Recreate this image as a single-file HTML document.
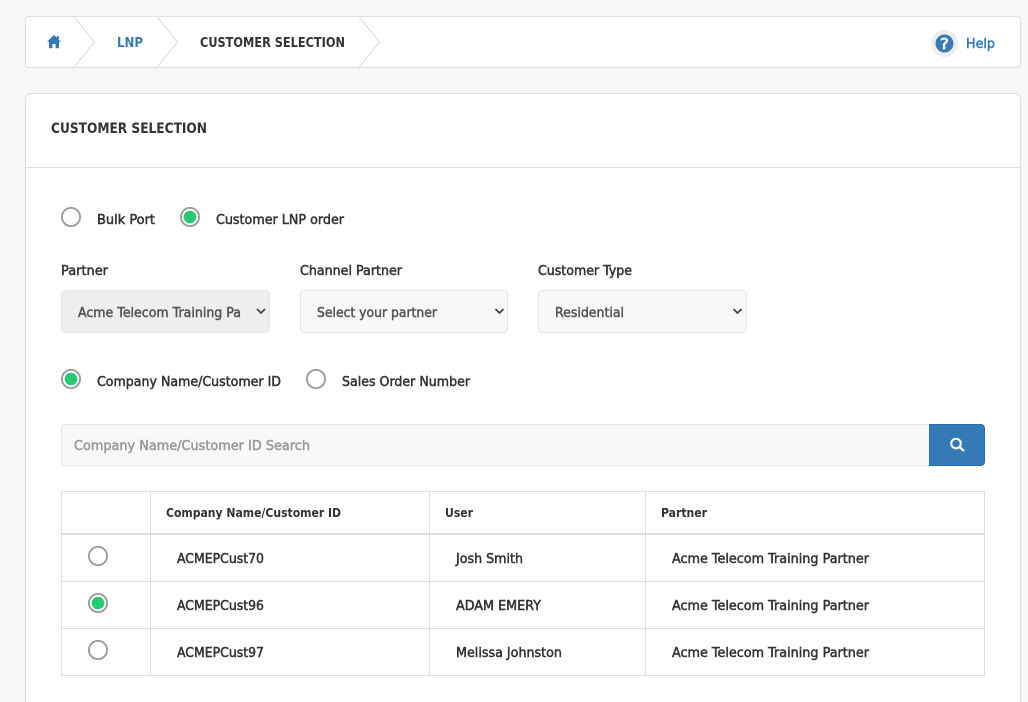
<!DOCTYPE html>
<html><head><meta charset="utf-8"><title>Customer Selection</title>
<style>
html,body{margin:0;padding:0;width:1028px;height:702px;overflow:hidden;background:#f8f8f8}
#w{position:relative;width:1028px;height:702px;overflow:hidden}
.a{position:absolute;box-sizing:border-box}
.sel{border:1px solid #e6e6e6;border-radius:4px;background:#f8f8f8;top:290px;height:43px}
.l{background:#dedede}
svg{position:absolute;left:0;top:0}
text{font-family:"DejaVu Sans","Liberation Sans",sans-serif;font-size:13px;fill:#333;stroke:#333;stroke-width:.5px}
text.b{font-weight:700;stroke-width:0}
text.blue{fill:#337ab7;stroke:#337ab7}
text.g{fill:#555;stroke:#555}
</style></head><body><div id="w">
<div class="a" style="left:25px;top:16px;width:996px;height:52px;background:#fff;border:1px solid #dfdfdf;border-radius:4px;box-shadow:0 0 1px rgba(0,0,0,.08)"></div>
<div class="a" style="left:25px;top:93px;width:996px;height:620px;background:#fff;border:1px solid #dfdfdf;border-radius:6px;box-shadow:0 0 1px rgba(0,0,0,.08)"></div>
<div class="a l" style="left:26px;top:167px;width:994px;height:1px"></div>
<div class="a sel" style="left:61px;width:209px;background:#eee"></div>
<div class="a sel" style="left:300px;width:208px"></div>
<div class="a sel" style="left:538px;width:209px"></div>
<div class="a" style="left:61px;top:424px;width:869px;height:42px;background:#f8f8f8;border:1px solid #e6e6e6;border-radius:4px 0 0 4px"></div>
<div class="a" style="left:929px;top:424px;width:56px;height:42px;background:#337ab7;border:1px solid #2e6da4;border-radius:0 4px 4px 0"></div>
<div class="a" style="left:61px;top:491px;width:924px;height:185px;border:1px solid #dedede"></div>
<div class="a l" style="left:150px;top:491px;width:1px;height:185px"></div>
<div class="a l" style="left:429px;top:491px;width:1px;height:185px"></div>
<div class="a l" style="left:645px;top:491px;width:1px;height:185px"></div>
<div class="a l" style="left:61px;top:533px;width:924px;height:2px"></div>
<div class="a l" style="left:61px;top:581px;width:924px;height:1px"></div>
<div class="a l" style="left:61px;top:628px;width:924px;height:1px"></div>
<svg width="1028" height="702" viewBox="0 0 1028 702">
<g fill="#fff" stroke="#dcdcdc">
<path d="M73 15.500L94.500 42L73 68.500"/>
<path d="M156 15.500L177.500 42L156 68.500"/>
<path d="M358 15.500L379.500 42L358 68.500"/>
</g>
<path d="M54 35L47 41.800H49V48.300H52.400V44H55.600V48.300H59V41.800H61L58.800 39.700V36H56.900V37.800Z" fill="#337ab7"/>
<circle cx="944.500" cy="43.500" r="13.500" fill="#eee"/>
<circle cx="944.500" cy="43.500" r="9" fill="#3a7ab5"/>
<text x="940" y="49" textLength="9" lengthAdjust="spacingAndGlyphs" style="font-size:15px;fill:#fff;stroke:#fff;stroke-width:.7px">?</text>

<text class="b blue" x="117" y="47" textLength="26" lengthAdjust="spacingAndGlyphs">LNP</text>
<text class="b" x="200" y="47" textLength="145" lengthAdjust="spacingAndGlyphs">CUSTOMER SELECTION</text>
<text class="blue" x="966" y="48" textLength="29" lengthAdjust="spacingAndGlyphs">Help</text>
<text class="b" x="51" y="133" textLength="156" lengthAdjust="spacingAndGlyphs" style="font-size:14px">CUSTOMER SELECTION</text>

<g fill="#fff" stroke="#999" stroke-width="1.800">
<circle cx="71" cy="217" r="9.100"/><circle cx="190" cy="217" r="9.100"/>
<circle cx="71" cy="379" r="9.100"/><circle cx="316" cy="379" r="9.100"/>
<circle cx="98" cy="556" r="9.100"/><circle cx="98" cy="603" r="9.100"/><circle cx="98" cy="650" r="9.100"/>
</g>
<g fill="#24cc70">
<circle cx="190" cy="217" r="6.300"/><circle cx="71" cy="379" r="6.300"/><circle cx="98" cy="603" r="6.300"/>
</g>

<text x="97" y="224" textLength="58" lengthAdjust="spacingAndGlyphs">Bulk Port</text>
<text x="216" y="224" textLength="128" lengthAdjust="spacingAndGlyphs">Customer LNP order</text>
<text x="61" y="275" textLength="47" lengthAdjust="spacingAndGlyphs">Partner</text>
<text x="300" y="275" textLength="102" lengthAdjust="spacingAndGlyphs">Channel Partner</text>
<text x="538" y="275" textLength="94" lengthAdjust="spacingAndGlyphs">Customer Type</text>

<text class="g" x="78" y="317" textLength="163" lengthAdjust="spacingAndGlyphs">Acme Telecom Training Pa</text>
<text class="g" x="317" y="317" textLength="120" lengthAdjust="spacingAndGlyphs">Select your partner</text>
<text class="g" x="555" y="317" textLength="69" lengthAdjust="spacingAndGlyphs">Residential</text>
<g fill="none" stroke="#444" stroke-width="1.800">
<path d="M257 309l4 4 4-4"/><path d="M495.500 309l4 4 4-4"/><path d="M733.500 309l4 4 4-4"/>
</g>

<text x="97" y="386" textLength="184" lengthAdjust="spacingAndGlyphs">Company Name/Customer ID</text>
<text x="342" y="386" textLength="128" lengthAdjust="spacingAndGlyphs">Sales Order Number</text>
<text x="74" y="450" textLength="236" lengthAdjust="spacingAndGlyphs" style="fill:#999;stroke:#999">Company Name/Customer ID Search</text>
<g fill="none" stroke="#fff"><circle cx="956" cy="443.500" r="4.800" stroke-width="2"/><path d="M959.500 447L964 451" stroke-width="2.200"/></g>

<text class="b" x="166" y="517" textLength="175" lengthAdjust="spacingAndGlyphs" style="font-size:12px">Company Name/Customer ID</text>
<text class="b" x="445" y="517" textLength="28" lengthAdjust="spacingAndGlyphs" style="font-size:12px">User</text>
<text class="b" x="661" y="517" textLength="46" lengthAdjust="spacingAndGlyphs" style="font-size:12px">Partner</text>
<text x="177" y="563" textLength="87" lengthAdjust="spacingAndGlyphs">ACMEPCust70</text>
<text x="456" y="563" textLength="67" lengthAdjust="spacingAndGlyphs">Josh Smith</text>
<text x="672" y="563" textLength="197" lengthAdjust="spacingAndGlyphs">Acme Telecom Training Partner</text>
<text x="177" y="610" textLength="87" lengthAdjust="spacingAndGlyphs">ACMEPCust96</text>
<text x="456" y="610" textLength="85" lengthAdjust="spacingAndGlyphs">ADAM EMERY</text>
<text x="672" y="610" textLength="197" lengthAdjust="spacingAndGlyphs">Acme Telecom Training Partner</text>
<text x="177" y="657" textLength="87" lengthAdjust="spacingAndGlyphs">ACMEPCust97</text>
<text x="456" y="657" textLength="106" lengthAdjust="spacingAndGlyphs">Melissa Johnston</text>
<text x="672" y="657" textLength="197" lengthAdjust="spacingAndGlyphs">Acme Telecom Training Partner</text>
</svg>
</div></body></html>
